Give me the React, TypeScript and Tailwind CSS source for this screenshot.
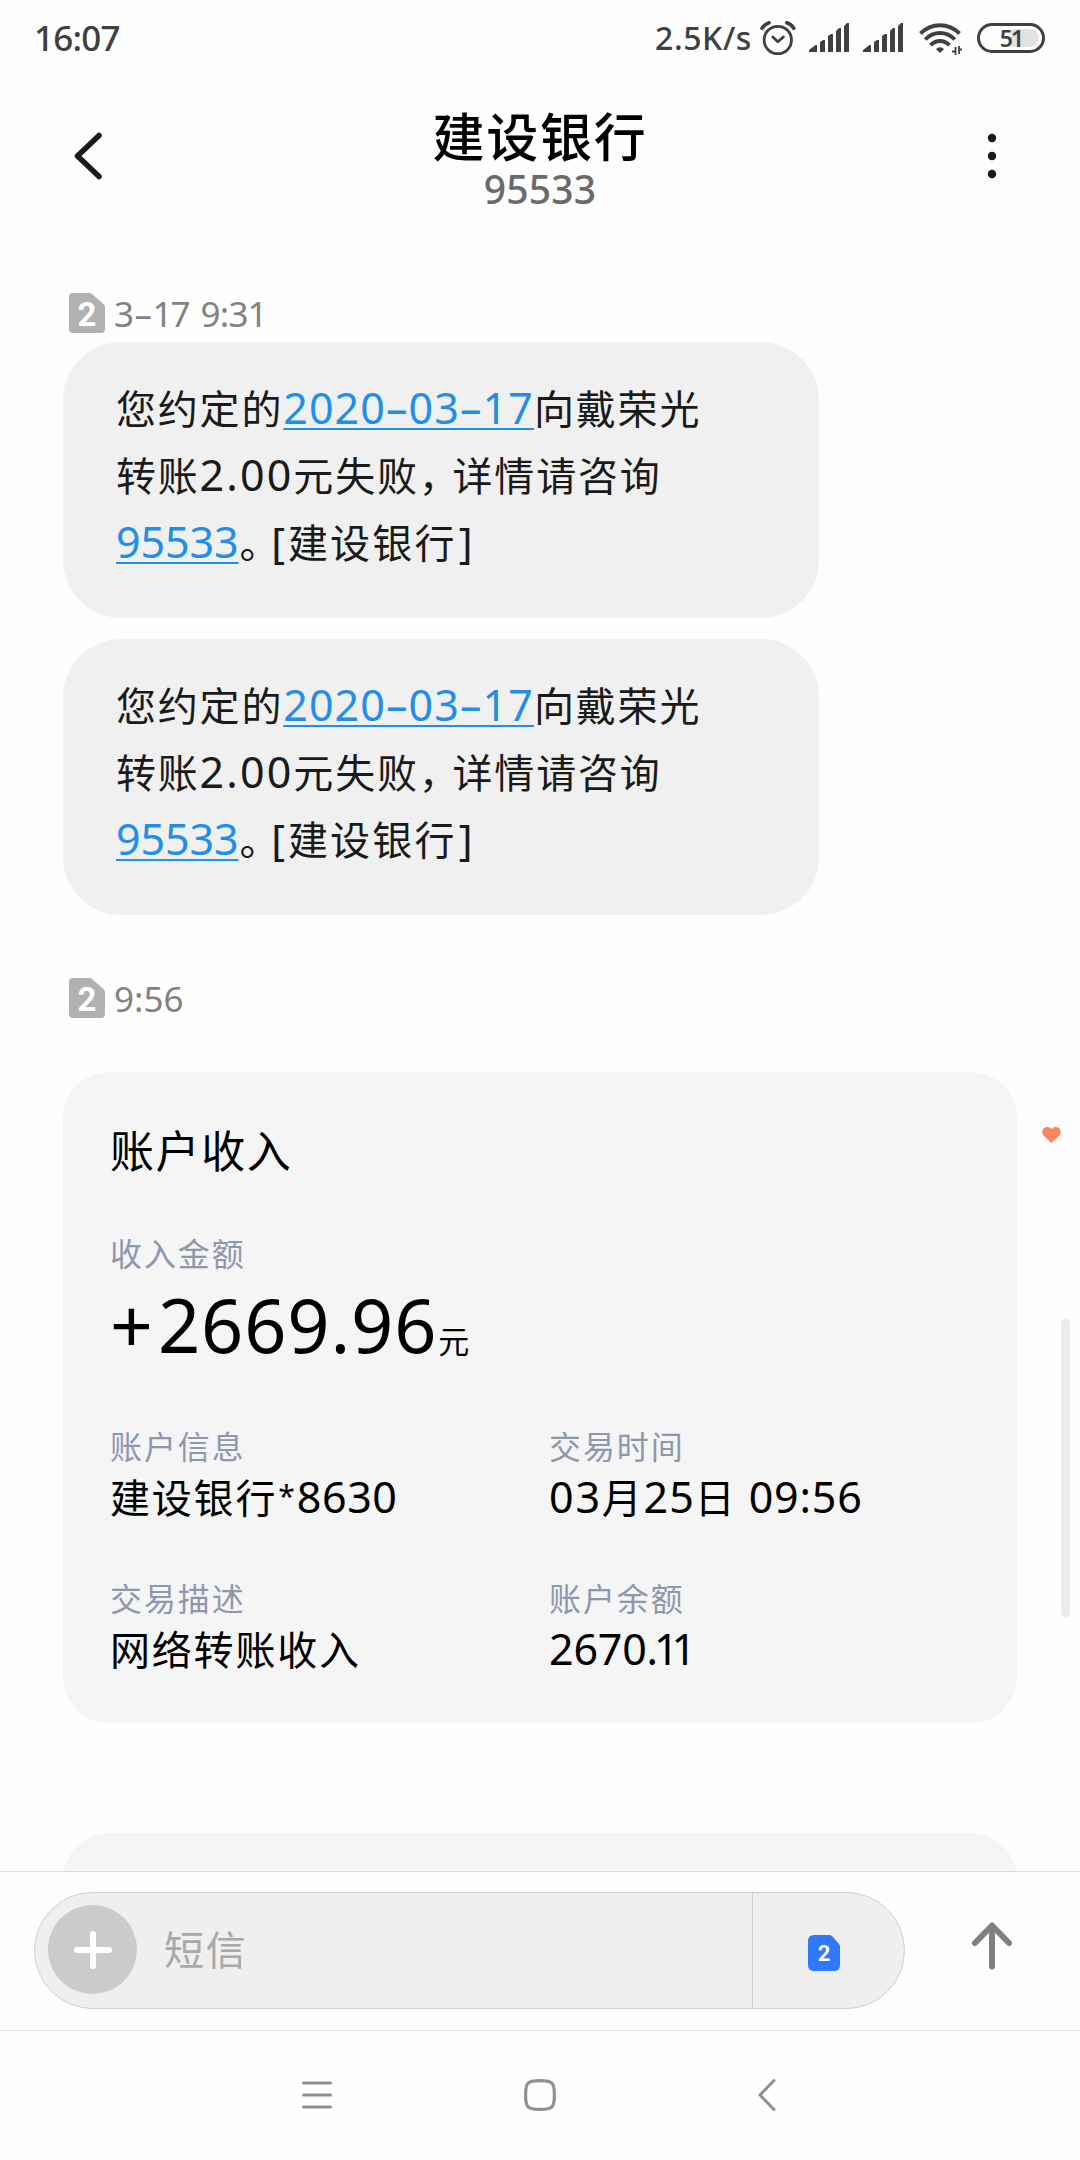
import type { ReactNode } from "react";

const INK = "#404040";

function Num({ children, className = "" }: { children: ReactNode; className?: string }) {
  return (
    <span className={`font-['Noto_Sans','Noto_Sans_CJK_SC',sans-serif] leading-none ${className}`}>
      {children}
    </span>
  );
}

function AlarmIcon() {
  return (
    <svg width="46" height="75" viewBox="0 0 46 75" fill="none" stroke={INK}>
      <circle cx="20.8" cy="40" r="13.7" strokeWidth="2.8" />
      <path d="M15.8 37l5 4.7 5.6-4.7" strokeWidth="2.8" strokeLinecap="round" strokeLinejoin="round" />
      <path d="M5 28.3c2-3 4.2-4.6 7-5.5M29.8 22.8c3 1 5.4 2.7 7 5.5" strokeWidth="3.6" strokeLinecap="round" />
    </svg>
  );
}

function SignalIcon() {
  return (
    <svg width="54" height="75" viewBox="0 0 54 75" fill={INK}>
      <path d="M6 52v-2l6.5-5h1.5v7z" />
      <path d="M17 52V42l3-2h2v12z" />
      <path d="M25 52V36l3-2h2v18z" />
      <path d="M33 52V31l3-3h2v24z" />
      <path d="M41 52V26l3-3h2v29z" />
    </svg>
  );
}

function WifiIcon() {
  return (
    <svg width="58" height="75" viewBox="0 0 58 75" fill="none" stroke={INK} strokeWidth="4">
      <path d="M9.5 33.5C20.5 22.5 37.5 22.5 48.5 33.5" />
      <path d="M14.3 39.5C22.5 30.8 35.5 30.8 43.7 39.5" />
      <path d="M19.5 45.2C25 39.7 33 39.7 38.5 45.2" />
      <path d="M29 53l-4-3.7c2-2.8 6-2.8 8 0z" fill={INK} stroke="none" />
      <path d="M44.5 47v8M41 51.5l3 0M48 46v8M48 49.5l3 0" strokeWidth="1.8" />
    </svg>
  );
}

function Battery() {
  return (
    <div className="ml-2 flex h-[30px] w-[68px] items-center justify-center rounded-full border-3 border-[#404040]">
      <div className="flex h-[18px] w-[56px] items-center justify-center rounded-full bg-linear-to-r from-transparent from-50% to-[#e2e2e2] to-50%">
        <Num className="pt-0.5 text-[23px] font-semibold tracking-[-2px] text-[#404040]">51</Num>
      </div>
    </div>
  );
}

function StatusBar() {
  return (
    <div className="flex h-[75px] items-center pr-[35px] pl-[34px] text-[#404040]">
      <Num className="text-[35px] leading-[75px] font-medium tracking-[-0.8px]">16:07</Num>
      <div className="ml-auto flex items-center">
        <Num className="mr-[5px] text-[32px] leading-[75px] font-medium tracking-[0.6px]">2.5K/s</Num>
        <AlarmIcon />
        <SignalIcon />
        <SignalIcon />
        <WifiIcon />
        <Battery />
      </div>
    </div>
  );
}

function Header() {
  return (
    <header className="flex h-[162px] justify-between">
      <svg width="140" height="162" viewBox="0 0 140 162" fill="none">
        <path d="M99 60.5L77.5 81L99 101.5" stroke="#1a1a1a" strokeWidth="5.5" strokeLinecap="round" strokeLinejoin="round" />
      </svg>
      <div className="flex flex-col items-center pt-[30px]">
        <h1 className="text-[52px] leading-[60px] font-medium tracking-[1.7px] text-black">建设银行</h1>
        <Num className="mt-1 text-[39px] leading-[49px] font-medium tracking-[0.2px] text-[#6a6a6a]">95533</Num>
      </div>
      <svg width="140" height="162" viewBox="0 0 140 162" fill="#1a1a1a">
        <circle cx="52" cy="63" r="4.2" />
        <circle cx="52" cy="81" r="4.2" />
        <circle cx="52" cy="99" r="4.2" />
      </svg>
    </header>
  );
}

function TimeRow({ children }: { children: ReactNode }) {
  return (
    <div className="flex h-10 items-center pl-[69px]">
      <div className="relative flex h-10 w-9 items-center justify-center">
        <svg className="absolute inset-0" width="36" height="40" viewBox="0 0 36 40">
          <path d="M4 0H20.5Q22 0 23 1L34.5 11Q36 12.3 36 14V36Q36 40 32 40H4Q0 40 0 36V4Q0 0 4 0Z" fill="#b1b1b1" />
        </svg>
        <span className="relative pt-0.5 font-['Roboto',sans-serif] text-[33px] leading-none font-bold text-white">2</span>
      </div>
      <Num className="ml-[9px] text-[35px] leading-10 text-[#828282]">{children}</Num>
    </div>
  );
}

function Link({ children, className }: { children: ReactNode; className?: string }) {
  return (
    <Num className={`text-[43px] text-[#218fe9] underline decoration-2 underline-offset-[4px] ${className}`}>
      {children}
    </Num>
  );
}

function Bubble() {
  return (
    <div className="ml-[63px] h-[276px] w-[756px] rounded-[58px] bg-[#f0f0f0] pt-8 pl-[53px] text-[40px] leading-[67px] tracking-[1.8px] whitespace-nowrap text-[#1a1a1a]">
      <p className="h-[67px]">
        您约定的<Link className="tracking-[1.1px]">2020–03–17</Link>向戴荣光
      </p>
      <p className="h-[67px]">
        转账<Num className="text-[43px] tracking-[2.1px]">2.00</Num>元失败
        <span className="mr-[12px] [font-feature-settings:'halt']">，</span>详情请咨询
      </p>
      <p className="h-[67px]">
        <Link className="tracking-[-0.1px]">95533</Link>
        <span className="mr-[10px] ml-px [font-feature-settings:'halt']">。</span>
        <Num className="text-[42px]">[</Num>
        <span className="ml-px tracking-[2.2px]">建设银行</span>
        <Num className="ml-0.5 text-[42px]">]</Num>
      </p>
    </div>
  );
}

function Field({ label, children }: { label: string; children: ReactNode }) {
  return (
    <div className="h-[152px]">
      <div className="text-[32px] leading-[48px] tracking-[1.9px] text-[#8f96b0]">{label}</div>
      <div className="text-[40px] leading-[55px] tracking-[1.8px] whitespace-nowrap text-black">{children}</div>
    </div>
  );
}

function IncomeCard() {
  return (
    <section className="ml-[63px] h-[651px] w-[954px] rounded-[46px] bg-[#f5f5f5] pl-[47px]">
      <h2 className="pt-[47px] text-[44px] leading-[60px] tracking-[1.6px] text-black">账户收入</h2>
      <div className="mt-[49px] text-[32px] leading-[48px] tracking-[1.9px] text-[#8f96b0]">收入金额</div>
      <div className="h-[96px] text-[31px] leading-[127px] text-black">
        <Num className="text-[75px] tracking-[5px]">+</Num>
        <Num className="text-[74px] tracking-[0.8px]">2669.96</Num>
        <span className="ml-px">元</span>
      </div>
      <div className="mt-[49px] grid grid-cols-[439px_1fr]">
        <Field label="账户信息">
          建设银行<Num className="relative -top-1.5 ml-px text-[30px] tracking-[2px]">*</Num>
          <Num className="text-[43px] tracking-[0.6px]">8630</Num>
        </Field>
        <Field label="交易时间">
          <Num className="text-[43px] tracking-[1.8px]">03</Num>月
          <Num className="text-[43px] tracking-[1px]">25</Num>日
          <Num className="ml-3 text-[43px] tracking-[0.8px]">09:56</Num>
        </Field>
        <Field label="交易描述">网络转账收入</Field>
        <Field label="账户余额">
          <Num className="text-[43px] tracking-[-0.2px]">2670.</Num>
          <Num className="-ml-1 text-[43px] tracking-[-7px]">11</Num>
        </Field>
      </div>
    </section>
  );
}

function InputBar() {
  return (
    <div className="flex h-[159px] border-t border-[#dcdcdc] pt-5 pl-[34px]">
      <div className="flex h-[117px] w-[871px] rounded-full border border-[#cfcfcf] bg-[#efefef]">
        <div className="flex w-[718px] items-center border-r border-[#cfcfcf] pl-[13px]">
          <div className="mb-0.5 flex size-[89px] items-center justify-center rounded-full bg-[#cbcbcb]">
            <svg width="40" height="40" viewBox="0 0 40 40" stroke="#fff" strokeWidth="6" strokeLinecap="round">
              <path d="M4 20H36M20 4V36" />
            </svg>
          </div>
          <span className="mb-1.5 ml-[27px] text-[40px] leading-[54px] tracking-[1.7px] text-[#a9a9a9]">短信</span>
        </div>
        <div className="relative mt-[42px] ml-[55px] flex h-9 w-8 items-center justify-center">
          <svg className="absolute inset-0" width="32" height="36" viewBox="0 0 32 36">
            <path d="M6 0H21.5Q23 0 24 1L31 9Q32 10 32 11.5V30Q32 36 26 36H6Q0 36 0 30V6Q0 0 6 0Z" fill="#2f78fe" />
          </svg>
          <span className="relative pt-0.5 font-['Roboto',sans-serif] text-[22px] leading-none font-bold text-white">2</span>
        </div>
      </div>
      <svg className="mt-7 ml-[65px]" width="44" height="52" viewBox="0 0 44 52" fill="none" stroke="#808080" strokeWidth="6" strokeLinecap="round" strokeLinejoin="round">
        <path d="M22 46.5V6M5 23L22 5.5L39 23" />
      </svg>
    </div>
  );
}

function NavBar() {
  return (
    <nav className="flex h-[128px] items-center justify-center gap-[184px] border-t border-[#e3e3e3]">
      <svg width="44" height="44" viewBox="0 0 44 44" stroke="#909090" strokeWidth="3" strokeLinecap="round">
        <path d="M13.5 10H40.5M13.5 22H40.5M13.5 34H40.5" />
      </svg>
      <svg width="44" height="44" viewBox="0 0 44 44" fill="none" stroke="#909090" strokeWidth="3.2">
        <path d="M22 7.6C34.5 7.6 36.4 9.5 36.4 22S34.5 36.4 22 36.4S7.6 34.5 7.6 22S9.5 7.6 22 7.6Z" />
      </svg>
      <svg width="44" height="44" viewBox="0 0 44 44" fill="none" stroke="#909090" strokeWidth="3" strokeLinecap="round" strokeLinejoin="round">
        <path d="M28 7.5L14 22L28 36.5" />
      </svg>
    </nav>
  );
}

export default function App() {
  return (
    <div className="h-[2160px] w-[1080px] overflow-hidden bg-[#fefefe] font-['Noto_Sans_CJK_SC',sans-serif]">
      <StatusBar />
      <Header />
      <main className="relative h-[1634px] overflow-hidden pt-14">
        <TimeRow>
          <span className="tracking-[0.5px]">3–</span>
          <span className="tracking-[-2px]">17</span>
          <span className="ml-3 tracking-[-0.8px]">9:31</span>
        </TimeRow>
        <div className="mt-[9px] mb-[63px] space-y-[21px]">
          <Bubble />
          <Bubble />
        </div>
        <TimeRow>9:56</TimeRow>
        <div className="mt-[54px] space-y-[110px]">
          <IncomeCard />
          <section className="ml-[63px] h-[651px] w-[954px] rounded-[46px] bg-[#f5f5f5]" />
        </div>
        <svg className="absolute top-[890px] left-[1042px]" width="19" height="16" viewBox="0 0 19 16" fill="#f98659">
          <path d="M9.5 16L1.5 8.5C-.5 6 0 2.5 2.2 1C4.5-.6 7.7-.3 9.5 2C11.3-.3 14.5-.6 16.8 1C19 2.5 19.5 6 17.5 8.5Z" />
        </svg>
        <div className="absolute top-[1082px] right-[10px] h-[298px] w-[9px] rounded-full bg-[#ebebeb]" />
      </main>
      <InputBar />
      <NavBar />
    </div>
  );
}
